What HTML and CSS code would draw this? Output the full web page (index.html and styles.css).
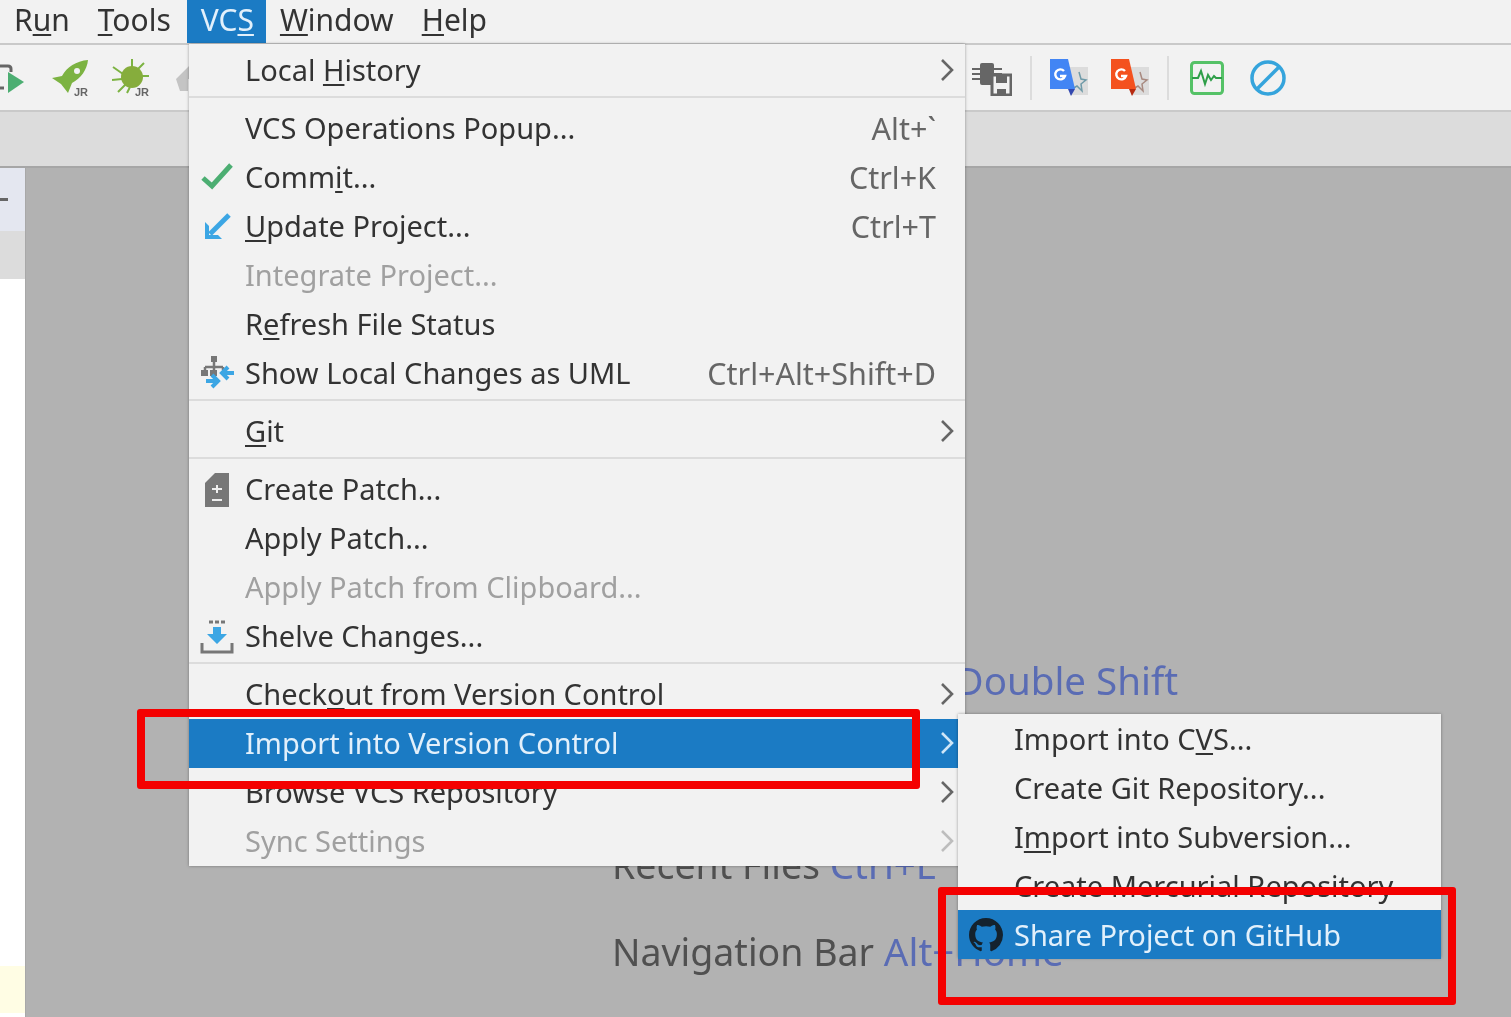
FILE: index.html
```html
<!DOCTYPE html>
<html lang="en">
<head>
    <meta charset="UTF-8">
    <title>VCS menu</title>
    <link rel="stylesheet" href="styles.css">
</head>
<body>
    <div class="app">
        <nav class="menubar">
            <span class="menubar-item">R<u>u</u>n</span>
            <span class="menubar-item"><u>T</u>ools</span>
            <span class="menubar-item active">VC<u>S</u></span>
            <span class="menubar-item"><u>W</u>indow</span>
            <span class="menubar-item"><u>H</u>elp</span>
        </nav>

        <div class="toolbar">
            <div class="tool-left">
                <svg class="tool-run" viewBox="0 0 26 34"><path d="M-4 5h12q3 0 3 3v3M-4 27h8" fill="none" stroke="#666" stroke-width="3"/><path d="M8 11l16 10L8 32z" fill="#4cae72"/></svg>
                <svg class="tool-icon" viewBox="0 0 38 38"><path d="M36 1C24 2 15 8 10 17L0 19l9 6 7 9 4-10c9-5 15-13 16-23z" fill="#7cb342"/><circle cx="25" cy="12" r="3" fill="#f2f2f2"/><text x="22" y="37" class="tool-jr">JR</text></svg>
                <svg class="tool-icon" viewBox="0 0 38 38"><g stroke="#7cb342" stroke-width="2"><path d="M1 8l10 7M0 21l10-1M6 33l8-8M20 0v8M37 17H26M32 4l-7 7M15 34l3-6"/></g><ellipse cx="20" cy="18" rx="11" ry="11" fill="#86ad3c"/><text x="23" y="37" class="tool-jr">JR</text></svg>
                <svg class="tool-icon" viewBox="0 0 38 38"><path d="M4 20L18 6l8 6v8H16v12H8z" fill="#c4c4c4"/></svg>
            </div>
            <div class="tool-right">
                <svg class="tool-chip" viewBox="0 0 40 36"><g stroke="#666" stroke-width="2"><path d="M0 9h30M0 14h30M0 19h30"/></g><rect x="8" y="3" width="14" height="22" rx="2" fill="#666"/><rect x="20" y="15" width="19" height="20" fill="#f2f2f2" stroke="#666" stroke-width="3"/><rect x="24" y="16" width="11" height="7" fill="#666"/><rect x="25" y="29" width="9" height="6" fill="#666"/></svg>
                <span class="tool-divider"></span>
                <svg class="tool-translate" viewBox="0 0 38 38"><rect x="20" y="8" width="18" height="28" fill="#dcdcdc"/><path d="M29 13l2 7 5 1-5 4 1 7-5-5-5 3" fill="none" stroke="#6e9aa8" stroke-width="1.5"/><path d="M0 0h18l7 30H0z" fill="#4285f4"/><path d="M18 30h7l-4 7z" fill="#3348b0"/><path d="M14 12a5 5 0 1 0 1 5h-5" fill="none" stroke="#fff" stroke-width="2.4"/></svg>
                <svg class="tool-translate gap-sm" viewBox="0 0 38 38"><rect x="20" y="8" width="18" height="28" fill="#dcdcdc"/><path d="M29 13l2 7 5 1-5 4 1 7-5-5-5 3" fill="none" stroke="#a88a80" stroke-width="1.5"/><path d="M0 0h18l7 30H0z" fill="#f4511e"/><path d="M18 30h7l-4 7z" fill="#b72a10"/><path d="M14 12a5 5 0 1 0 1 5h-5" fill="none" stroke="#fff" stroke-width="2.4"/></svg>
                <span class="tool-divider"></span>
                <svg class="tool-monitor" viewBox="0 0 34 34"><rect x="1.5" y="1.5" width="31" height="31" rx="3" fill="none" stroke="#55c267" stroke-width="3"/><path d="M2 17h6l3-7 4 13 3-9 3 5 3-4 2 2h6" fill="none" stroke="#2e9e48" stroke-width="2"/></svg>
                <svg class="tool-block" viewBox="0 0 36 36"><circle cx="18" cy="18" r="16" fill="none" stroke="#35a4dc" stroke-width="3.5"/><path d="M7 29L29 7" stroke="#35a4dc" stroke-width="3.5"/></svg>
            </div>
        </div>

        <div class="tabstrip"></div>

        <div class="workspace">
            <aside class="sidebar">
                <div class="side-selected"><span class="side-dash"></span></div>
                <div class="side-grey"></div>
                <div class="side-white"></div>
                <div class="side-note"></div>
                <div class="side-end"></div>
            </aside>
            <main class="editor">
                <p class="hint">Search Everywhere <span class="hint-key">Double Shift</span></p>
                <p class="hint">Go to File <span class="hint-key">Ctrl+Shift+N</span></p>
                <p class="hint">Recent Files <span class="hint-key">Ctrl+E</span></p>
                <p class="hint hint-last">Navigation Bar <span class="hint-key">Alt+Home</span></p>
            </main>
        </div>

        <div class="menu vcs-menu">
            <div class="row first"><span class="row-icon"></span><span class="row-label">Local <u>H</u>istory</span><svg class="arrow" viewBox="0 0 14 24"><path d="M2 2l10 10L2 22"/></svg></div>
            <div class="sep"></div>
            <div class="row"><span class="row-icon"></span><span class="row-label">VCS Operations Popup...</span><span class="row-key">Alt+`</span><span class="arrow-space"></span></div>
            <div class="row"><span class="row-icon"><svg class="icon-commit" viewBox="0 0 32 28" width="32" height="28"><path d="M2 16l9 8L30 3" fill="none" stroke="#4cae72" stroke-width="5"/></svg></span><span class="row-label">Comm<u>i</u>t...</span><span class="row-key">Ctrl+K</span><span class="arrow-space"></span></div>
            <div class="row"><span class="row-icon"><svg viewBox="0 0 28 28" width="28" height="28"><path d="M26 2L7 21" fill="none" stroke="#3ca6e4" stroke-width="5"/><path d="M2 9v17h17l-4-4H6v-9z" fill="#3ca6e4"/></svg></span><span class="row-label"><u>U</u>pdate Project...</span><span class="row-key">Ctrl+T</span><span class="arrow-space"></span></div>
            <div class="row disabled"><span class="row-icon"></span><span class="row-label">Integrate Project...</span></div>
            <div class="row"><span class="row-icon"></span><span class="row-label">R<u>e</u>fresh File Status</span></div>
            <div class="row"><span class="row-icon"><svg viewBox="0 0 36 36" width="36" height="36"><path d="M15 3v12M6 11h18M6 11v5M24 11v3" fill="none" stroke="#777" stroke-width="2.5"/><rect x="12" y="0" width="6" height="6" fill="#777"/><rect x="2" y="14" width="7" height="6" fill="#777"/><rect x="11" y="14" width="7" height="6" fill="#777"/><path d="M35 17H24M29 11l-6 6 6 6M7 25h11M13 19l6 6-6 6" fill="none" stroke="#3ca6e4" stroke-width="4"/></svg></span><span class="row-label">Show Local Changes as UML</span><span class="row-key">Ctrl+Alt+Shift+D</span><span class="arrow-space"></span></div>
            <div class="sep"></div>
            <div class="row"><span class="row-icon"></span><span class="row-label"><u>G</u>it</span><svg class="arrow" viewBox="0 0 14 24"><path d="M2 2l10 10L2 22"/></svg></div>
            <div class="sep"></div>
            <div class="row"><span class="row-icon"><svg viewBox="0 0 24 34" width="24" height="34"><path d="M10 0h14v34H0V10z" fill="#777"/><path d="M7 16h10M12 12v8M7 27h10" stroke="#eee" stroke-width="2"/></svg></span><span class="row-label">Create Patch...</span></div>
            <div class="row"><span class="row-icon"></span><span class="row-label">Apply Patch...</span></div>
            <div class="row disabled"><span class="row-icon"></span><span class="row-label">Apply Patch from Clipboard...</span></div>
            <div class="row"><span class="row-icon"><svg viewBox="0 0 34 34" width="34" height="34"><path d="M9 2h4M15 2h4M21 2h4" stroke="#777" stroke-width="3"/><path d="M13 7h8v7h6L17 24 7 14h6z" fill="#3ca6e4"/><path d="M2 23v9h30v-9" fill="none" stroke="#777" stroke-width="3"/></svg></span><span class="row-label">Shelve Changes...</span></div>
            <div class="sep"></div>
            <div class="row"><span class="row-icon"></span><span class="row-label">Check<u>o</u>ut from Version Control</span><svg class="arrow" viewBox="0 0 14 24"><path d="M2 2l10 10L2 22"/></svg></div>
            <div class="row selected"><span class="row-icon"></span><span class="row-label">Import into Version Control</span><svg class="arrow" viewBox="0 0 14 24"><path d="M2 2l10 10L2 22"/></svg></div>
            <div class="row"><span class="row-icon"></span><span class="row-label">Browse VCS Repository</span><svg class="arrow" viewBox="0 0 14 24"><path d="M2 2l10 10L2 22"/></svg></div>
            <div class="row disabled"><span class="row-icon"></span><span class="row-label">Sync Settings</span><svg class="arrow" viewBox="0 0 14 24"><path d="M2 2l10 10L2 22"/></svg></div>
        </div>

        <div class="menu import-menu">
            <div class="row"><span class="row-icon"></span><span class="row-label">Import into C<u>V</u>S...</span></div>
            <div class="row"><span class="row-icon"></span><span class="row-label">Create Git Repository...</span></div>
            <div class="row"><span class="row-icon"></span><span class="row-label">I<u>m</u>port into Subversion...</span></div>
            <div class="row"><span class="row-icon"></span><span class="row-label">Create Mercurial Repository</span></div>
            <div class="row selected"><span class="row-icon"><svg viewBox="0 0 16 16" width="34" height="34"><path fill="#14222e" d="M8 0C3.58 0 0 3.58 0 8c0 3.54 2.29 6.53 5.47 7.59.4.07.55-.17.55-.38 0-.19-.01-.82-.01-1.49-2.01.37-2.53-.49-2.69-.94-.09-.23-.48-.94-.82-1.13-.28-.15-.68-.52-.01-.53.63-.01 1.08.58 1.23.82.72 1.21 1.87.87 2.33.66.07-.52.28-.87.51-1.07-1.78-.2-3.64-.89-3.64-3.95 0-.87.31-1.59.82-2.15-.08-.2-.36-1.02.08-2.12 0 0 .67-.21 2.2.82.64-.18 1.32-.27 2-.27.68 0 1.36.09 2 .27 1.53-1.04 2.2-.82 2.2-.82.44 1.1.16 1.92.08 2.12.51.56.82 1.27.82 2.15 0 3.07-1.87 3.75-3.65 3.95.29.25.54.73.54 1.48 0 1.07-.01 1.93-.01 2.2 0 .21.15.46.55.38A8.013 8.013 0 0016 8c0-4.42-3.58-8-8-8z"/></svg></span><span class="row-label">Share Project on GitHub</span></div>
        </div>

        <div class="callout callout-import"></div>
        <div class="callout callout-share"></div>
    </div>
</body>
</html>
```

FILE: styles.css
```css
html, body {
    margin: 0;
    padding: 0;
    height: 100%;
    overflow: hidden;
}

.app {
    position: relative;
    width: 1511px;
    height: 1017px;
    overflow: hidden;
    display: flex;
    flex-direction: column;
    font-family: "Noto Sans", sans-serif;
    font-size: 29px;
    color: #333;
    background-color: #b2b2b2;
    filter: blur(0.7px);
}

u {
    text-underline-offset: 3px;
    text-decoration-thickness: 2px;
}

/* top bars */
.menubar {
    height: 43px;
    flex: none;
    display: flex;
    font-size: 30px;
    background-color: #f2f2f2;
    border-bottom: 2px solid #c9c9c9;
}

.menubar-item {
    padding: 0 14px;
    line-height: 40px;
}

.menubar-item.active {
    margin-left: 2px;
    padding-right: 12px;
    background-color: #1b7bc4;
    color: #e2f0fb;
}

.toolbar {
    height: 65px;
    flex: none;
    display: flex;
    align-items: center;
    background-color: #f2f2f2;
    border-bottom: 2px solid #c9c9c9;
}

.tool-left {
    width: 972px;
    display: flex;
    align-items: center;
    gap: 22px;
}

.tool-run {
    width: 26px;
    height: 34px;
    margin-right: 4px;
}

.tool-icon {
    width: 38px;
    height: 38px;
}

.tool-jr {
    font-family: "Liberation Sans", sans-serif;
    font-size: 11px;
    font-weight: bold;
    fill: #666;
}

.tool-right {
    display: flex;
    align-items: center;
}

.tool-chip {
    width: 40px;
    height: 36px;
}

.tool-divider {
    width: 2px;
    height: 44px;
    margin: 0 18px;
    background-color: #dcdcdc;
}

.tool-translate {
    width: 38px;
    height: 38px;
}

.gap-sm {
    margin-left: 23px;
}

.tool-monitor {
    width: 34px;
    height: 34px;
    margin-left: 3px;
}

.tool-block {
    width: 36px;
    height: 36px;
    margin-left: 26px;
}

.tabstrip {
    height: 54px;
    flex: none;
    background-color: #dcdcdc;
    border-bottom: 2px solid #a6a6a6;
}

/* main area */
.workspace {
    flex: 1;
    display: flex;
}

.sidebar {
    width: 25px;
    flex: none;
    display: flex;
    flex-direction: column;
    background-color: #fff;
    border-right: 1px solid #a8a8a8;
}

.side-selected {
    height: 63px;
    display: flex;
    align-items: center;
    background-color: #e4e7f0;
}

.side-dash {
    width: 8px;
    height: 3px;
    background-color: #666;
}

.side-grey {
    height: 48px;
    background-color: #dcdcdc;
}

.side-white {
    height: 687px;
}

.side-note {
    height: 47px;
    background-color: #fffde4;
}

.editor {
    flex: 1;
    padding: 488px 0 0 586px;
}

.hint {
    margin: 0 0 44px;
    height: 48px;
    line-height: 48px;
    font-size: 37.5px;
    white-space: nowrap;
    color: #505050;
}

.hint-last {
    margin-top: -5px;
}

.hint-key {
    font-size: 38.5px;
    color: #5a6cb4;
}

/* popup menus */
.menu {
    position: absolute;
    background-color: #f2f2f2;
    box-shadow: 0 0 3px rgba(0, 0, 0, 0.35);
}

.vcs-menu {
    left: 189px;
    top: 44px;
    width: 776px;
    height: 822px;
    padding-top: 2px;
    box-sizing: border-box;
}

.import-menu {
    left: 958px;
    top: 714px;
    width: 483px;
    height: 244px;
}

.row {
    height: 49px;
    display: flex;
    align-items: center;
    white-space: nowrap;
}

.import-menu .row {
    height: 49.1px;
}

.vcs-menu .row-label {
    padding-bottom: 2px;
}

.row-icon {
    width: 56px;
    flex: none;
    display: flex;
    justify-content: center;
    align-items: center;
}

.icon-commit {
    margin-bottom: 4px;
}

.row-label {
    flex: 1;
}

.row-key {
    font-size: 30.5px;
    margin-right: 2px;
    padding-bottom: 2px;
    color: #666;
}

.arrow, .arrow-space {
    width: 14px;
    flex: none;
    margin: 0 11px 2px 2px;
}

.arrow {
    height: 24px;
    fill: none;
    stroke: #666;
    stroke-width: 2.6;
}

.sep {
    height: 2px;
    margin: 1px 0 6px;
    background-color: #dcdcdc;
}

.row.disabled {
    color: #a0a0a0;
}

.row.disabled .arrow {
    stroke: #bdbdbd;
}

.row.selected {
    background-color: #1b7bc4;
    color: #e2f0fb;
}

.row.selected .arrow {
    stroke: #cfe6f7;
}

/* red annotation boxes */
.callout {
    position: absolute;
    border: 8px solid #f40000;
    border-radius: 3px;
    box-sizing: border-box;
}

.callout-import {
    left: 137px;
    top: 709px;
    width: 783px;
    height: 80px;
}

.callout-share {
    left: 938px;
    top: 887px;
    width: 518px;
    height: 118px;
}
```
